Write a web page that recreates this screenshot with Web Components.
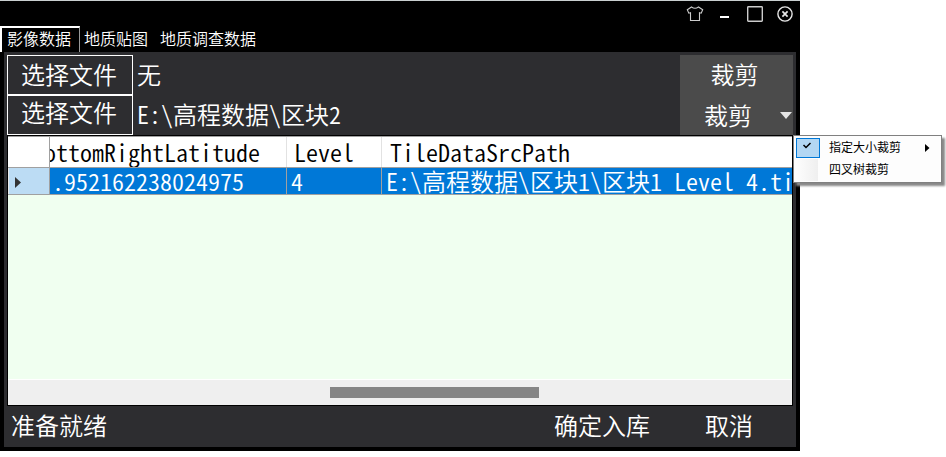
<!DOCTYPE html>
<html lang="zh-CN"><head><meta charset="utf-8"><title>影像数据</title>
<style>html,body{margin:0;background:#fff;width:946px;height:457px;overflow:hidden}</style></head>
<body><app-window></app-window>
<script>
function define(name, html){
  customElements.define(name, class extends HTMLElement{
    constructor(){super();this.attachShadow({mode:'open'}).innerHTML='<style>*{box-sizing:border-box}</style>'+html;}
  });
}
define('title-bar',`<style>:host{display:flex;height:25px;justify-content:flex-end;padding:4px 6px 0 0;gap:12px}svg{display:block;width:18px;height:18px;fill:none;stroke:#e8e8e8}</style>
<svg viewBox="0 0 18 18"><path d="M5.5 2 Q9 4.6 12.5 2 L16.7 4.7 L15.2 8.2 L13.5 7.7 V15.5 H4.5 V7.7 L2.8 8.2 L1.3 4.7 Z" stroke="#ccc" stroke-width="1.1"/></svg>
<svg viewBox="0 0 18 18"><path d="M4 12H13" stroke="#fff" stroke-width="2"/></svg>
<svg viewBox="0 0 18 18"><rect x="1.7" y="1.7" width="14.6" height="14.6" rx=".7" stroke="#ccc" stroke-width="1.4"/></svg>
<svg viewBox="0 0 18 18"><circle cx="9" cy="9" r="7.1" stroke-width="1.4"/><path d="M6.4 6.4L11.6 11.6M11.6 6.4L6.4 11.6" stroke-width="1.7"/></svg>`);
define('tab-item',`<style>:host{display:block;height:26px;padding:0 4px;line-height:20px;font-size:16px;color:#fff;border:2px solid transparent;border-bottom:0;white-space:nowrap}
:host([selected]){border-color:#fff #999 #fff #fff;border-right-width:1px;padding:0 8px 0 5px}</style><slot></slot>`);
define('tab-strip',`<style>:host{display:flex;height:26px;gap:0}::slotted(tab-item:nth-child(2)){margin-left:-2px}</style><slot></slot>`);
define('push-button',`<style>:host{display:block;width:126px;height:40px;border:1px solid #fff;text-align:center;line-height:36px;padding-right:2px;color:#fff}
:host([raised]){line-height:32px}
:host([fill]){width:113px;border:0;background:#4b4b4b;line-height:38px;padding-right:4px}
:host([split]){display:flex;align-items:center;justify-content:space-between;padding:0 1px 0 24px}
svg{display:none}:host([split]) svg{display:block}</style><slot></slot><svg width="12" height="7"><path d="M0 0H12L6 7Z" fill="#e4e4e4"/></svg>`);
define('file-row',`<style>:host{display:flex;height:40px;color:#fff;line-height:38px}.v{flex:1;padding-left:4px;white-space:pre}</style><slot name="pick"></slot><div class="v"><slot></slot></div><slot name="action"></slot>`);
define('data-grid',`<style>:host{display:flex;flex-direction:column;height:271px;border:1px solid #000;background:#f0fff0;overflow:hidden}
.r{display:grid;grid-template-columns:42px 237px 95px 410px;white-space:pre}
.r>*{overflow:hidden;border-right:1px solid #a0a0a0;min-width:0}
.h{height:32px;background:#fff;color:#000;border-top:1px solid #a0a0a0;border-bottom:1px solid #a0a0a0;line-height:30px}
.h>*{border-color:#e2e2e2;height:30px}.h>:first-child{border-color:#a0a0a0}
.b{height:27px;background:#0078d7;color:#fff;border-bottom:1px solid #a0a0a0;line-height:26px}
.m{background:#bcdcf4;padding:9px 0 0 6px;border-left:1px solid #e8e8e8}.m svg{display:block}
.b>:last-child,.h>:last-child{border-right:0}
.o{display:flex;justify-content:flex-end}
.s{margin-top:auto;height:26px;background:#efefef;border-top:1px solid #fff;padding:7px 0 0 322px}
.t{width:209px;height:11px;background:#858585}</style>
<div class="r h"><span></span><span class="o" style="padding-right:26px"><span>BottomRightLatitude</span></span><span style="padding-left:7px">Level</span><span style="padding-left:8px">TileDataSrcPath</span></div>
<div class="r b"><span class="m"><svg width="6" height="11"><path d="M0 0L6 5.5L0 11Z" fill="#333"/></svg></span><span style="padding-left:2px">.952162238024975</span><span style="padding-left:4px">4</span><span style="padding-left:4px">E:\\高程数据\\区块1\\区块1 Level 4.ti</span></div>
<div class="s"><div class="t"></div></div>`);
define('status-bar',`<style>:host{display:flex;height:41px;padding:0 40px 0 4px;line-height:38px;color:#fff;white-space:nowrap}.a{margin-left:auto;margin-right:55px}</style><span>准备就绪</span><span class="a">确定入库</span><span>取消</span>`);
define('menu-item',`<style>:host{display:flex;height:22px;align-items:center;font-size:12px;font-weight:400;color:#000}
.k{width:24px;height:22px;margin-right:9px;background:linear-gradient(90deg,#fdfdfd 0,#efefef 22px,#fdfdfd 22px)}
:host([checked]) .k{border:1px solid #0078d7;background:#b3d7f3;height:20px}
.x{margin-top:-2px;line-height:18px}
svg{display:none}:host([checked]) svg{display:block}.a{margin-left:auto;margin-right:10px}</style>
<div class="k"><svg width="18" height="16"><path d="M6.5 6L9 8.5L13.5 4" fill="none" stroke="#000" stroke-width="1.5"/></svg></div><span class="x"><slot></slot></span><svg class="a" width="5" height="8"><path d="M0 0L4.5 4L0 8Z"/></svg>`);
define('pop-menu',`<style>:host{display:block;position:absolute;left:793px;top:135px;width:149px;height:48px;background:#fdfdfd;border:1px solid #808080;padding:1px 1px 1px 2px;box-shadow:3px 3px 2px #888;font-family:"Noto Sans CJK SC",sans-serif}</style><slot></slot>`);
define('app-window',`<style>:host{display:block;width:800px;height:450px;background:#000;border-top:1px solid #c9cfd0;font-family:"Noto Sans CJK SC DemiLight","Noto Sans CJK SC",sans-serif;font-weight:350;font-size:24px;font-feature-settings:"hwid"}
.p{margin:0 4px;height:395px;background:#2d2d30;padding:3px 3px 0}</style>
<title-bar></title-bar><tab-strip><tab-item selected>影像数据</tab-item><tab-item>地质贴图</tab-item><tab-item>地质调查数据</tab-item></tab-strip>
<div class="p"><file-row><push-button slot="pick">选择文件</push-button>无<push-button slot="action" fill>裁剪</push-button></file-row>
<file-row><push-button slot="pick" raised>选择文件</push-button>E:\\高程数据\\区块2<push-button slot="action" fill split>裁剪</push-button></file-row>
<data-grid></data-grid><status-bar></status-bar></div>
<pop-menu><menu-item checked>指定大小裁剪</menu-item><menu-item>四叉树裁剪</menu-item></pop-menu>`);
</script></body></html>
